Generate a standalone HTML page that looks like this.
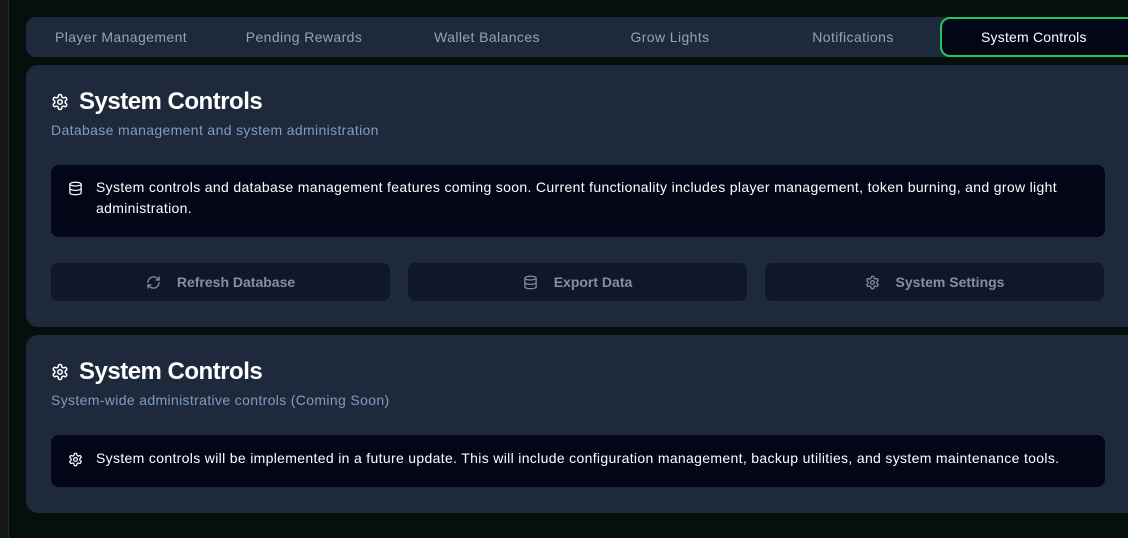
<!DOCTYPE html>
<html><head><style>
*{box-sizing:border-box;margin:0;padding:0}
body{width:1128px;height:538px;overflow:hidden;background:#050f0b;font-family:"Liberation Sans",sans-serif;position:relative}
.side{position:absolute;left:0;top:0;width:9px;height:538px;background:#17171b;border-right:1px solid #2a2a30}
.tabs{position:absolute;left:26px;top:17px;width:1120px;height:40px;background:#1e293b;border-radius:10px}
.tab{position:absolute;top:0;height:40px;line-height:40px;font-size:14px;color:#94a3b8;text-align:center;letter-spacing:0.4px}
.active{position:absolute;left:940px;top:17px;width:200px;height:40px;background:#020617;border:2px solid #22c55e;border-radius:10px;color:#fff;font-size:14px;line-height:36px;padding-left:39px;letter-spacing:0.2px}
.card{position:absolute;left:26px;width:1120px;background:#1e293b;border-radius:12px}
.h{position:absolute;left:25px;font-size:24px;font-weight:bold;color:#fff;display:flex;align-items:center;gap:10px;letter-spacing:-0.5px}
.sub{position:absolute;left:25px;font-size:14px;color:#7f9cc0;letter-spacing:0.35px}
.box{position:absolute;left:25px;width:1054px;background:#020617;border-radius:8px;color:#fff;font-size:14px;line-height:21px;padding:12px 20px 12px 45px;letter-spacing:0.33px}
.box svg{position:absolute;left:17px}
.btn{position:absolute;top:198px;width:339px;height:38px;background:#0f172a;border-radius:7px;color:#8390a2;font-size:14px;font-weight:bold;display:flex;align-items:center;justify-content:center;gap:16px}
</style></head><body>
<div class="side"></div>
<div class="tabs">
<div class="tab" style="left:0;width:190px">Player Management</div>
<div class="tab" style="left:183px;width:190px">Pending Rewards</div>
<div class="tab" style="left:366px;width:190px">Wallet Balances</div>
<div class="tab" style="left:549px;width:190px">Grow Lights</div>
<div class="tab" style="left:732px;width:190px">Notifications</div>
</div>
<div class="active">System Controls</div>
<svg width="0" height="0" style="position:absolute"><defs>
<g id="gear" fill="none" stroke="currentColor" stroke-width="2" stroke-linecap="round" stroke-linejoin="round"><path d="M12.22 2h-.44a2 2 0 0 0-2 2v.18a2 2 0 0 1-1 1.73l-.43.25a2 2 0 0 1-2 0l-.15-.08a2 2 0 0 0-2.73.73l-.22.38a2 2 0 0 0 .73 2.730l.15.1a2 2 0 0 1 1 1.72v.51a2 2 0 0 1-1 1.74l-.15.09a2 2 0 0 0-.73 2.73l.22.38a2 2 0 0 0 2.73.73l.15-.08a2 2 0 0 1 2 0l.43.25a2 2 0 0 1 1 1.73V20a2 2 0 0 0 2 2h.44a2 2 0 0 0 2-2v-.18a2 2 0 0 1 1-1.73l.43-.25a2 2 0 0 1 2 0l.15.08a2 2 0 0 0 2.73-.73l.22-.39a2 2 0 0 0-.73-2.73l-.15-.08a2 2 0 0 1-1-1.74v-.5a2 2 0 0 1 1-1.74l.15-.09a2 2 0 0 0 .73-2.73l-.22-.38a2 2 0 0 0-2.73-.73l-.15.08a2 2 0 0 1-2 0l-.43-.25a2 2 0 0 1-1-1.73V4a2 2 0 0 0-2-2z"/><circle cx="12" cy="12" r="3"/></g>
<g id="db" fill="none" stroke="currentColor" stroke-width="2" stroke-linecap="round"><ellipse cx="12" cy="5" rx="9" ry="3"/><path d="M3 5v14a9 3 0 0 0 18 0V5"/><path d="M3 12a9 3 0 0 0 18 0"/></g>
<g id="ref" fill="none" stroke="currentColor" stroke-width="2" stroke-linecap="round" stroke-linejoin="round"><path d="M3 12a9 9 0 0 1 9-9 9.75 9.75 0 0 1 6.74 2.74L21 8"/><path d="M21 3v5h-5"/><path d="M21 12a9 9 0 0 1-9 9 9.75 9.75 0 0 1-6.74-2.74L3 16"/><path d="M8 16H3v5"/></g>
</defs></svg>
<div class="card" style="top:65px;height:262px">
<div class="h" style="top:23px"><svg width="18" height="18" viewBox="0 0 24 24" style="color:#fff"><use href="#gear"/></svg>System Controls</div>
<div class="sub" style="top:57px">Database management and system administration</div>
<div class="box" style="top:100px;height:72px"><svg width="15" height="15" viewBox="0 0 24 24" style="top:16px;color:#fff"><use href="#db"/></svg>System controls and database management features coming soon. Current functionality includes player management, token burning, and grow light administration.</div>
<div class="btn" style="left:25px"><svg width="15" height="15" viewBox="0 0 24 24"><use href="#ref"/></svg>Refresh Database</div>
<div class="btn" style="left:382px"><svg width="15" height="15" viewBox="0 0 24 24"><use href="#db"/></svg>Export Data</div>
<div class="btn" style="left:739px"><svg width="15" height="15" viewBox="0 0 24 24"><use href="#gear"/></svg>System Settings</div>
</div>
<div class="card" style="top:335px;height:178px">
<div class="h" style="top:23px"><svg width="18" height="18" viewBox="0 0 24 24" style="color:#fff"><use href="#gear"/></svg>System Controls</div>
<div class="sub" style="top:57px">System-wide administrative controls (Coming Soon)</div>
<div class="box" style="top:100px;height:52px;padding-top:13px"><svg width="15" height="15" viewBox="0 0 24 24" style="top:17px;color:#fff"><use href="#gear"/></svg>System controls will be implemented in a future update. This will include configuration management, backup utilities, and system maintenance tools.</div>
</div>
</body></html>
